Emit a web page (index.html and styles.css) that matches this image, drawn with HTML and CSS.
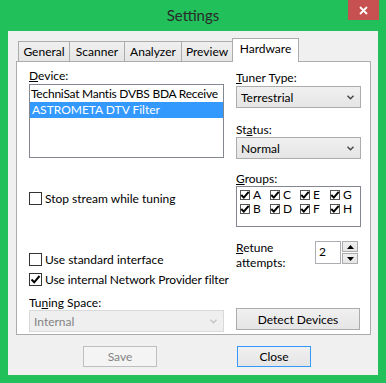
FILE: index.html
```
<!DOCTYPE html>
<html>
<head>
<meta charset="utf-8">
<link rel="stylesheet" href="styles.css">
</head>
<body>
<div class="window">
  <div class="titlebar">
    <span></span>
    <span class="title">Settings</span>
    <span class="close-x"><svg width="9" height="9" viewBox="0 0 9 9"><path d="M1 1L8 8M8 1L1 8" stroke="#fff" stroke-width="1.8"/></svg></span>
  </div>
  <div class="client">
    <div class="tabs">
      <div class="tab tab-general">General</div>
      <div class="tab tab-scanner">Scanner</div>
      <div class="tab tab-analyzer">Analyzer</div>
      <div class="tab tab-preview">Preview</div>
      <div class="tab tab-hardware active">Hardware</div>
    </div>
    <div class="panel">
      <div class="col-left">
        <div class="lbl"><u>D</u>evice:</div>
        <div class="listbox">
          <div class="item item-tight">TechniSat Mantis DVBS BDA Receive</div>
          <div class="item selected">ASTROMETA DTV Filter</div>
        </div>
        <div class="chk chk-stop"><span class="box"></span>Stop stream while tuning</div>
        <div class="chk chk-std"><span class="box"></span>Use standard interface</div>
        <div class="chk chk-net"><span class="box"><svg width="11" height="11" viewBox="0 0 11 11"><path d="M1.5 5.5L4.2 8.3L9.5 2" fill="none" stroke="#000" stroke-width="2"/></svg></span>Use internal Network Provider filter</div>
        <div class="lbl lbl-space">Tu<u>n</u>ing Space:</div>
        <div class="select disabled"><span>Internal</span><svg width="7" height="5" viewBox="0 0 7 5"><path d="M0.5 0.8L3.5 3.8L6.5 0.8" fill="none" stroke="#c4c4c4" stroke-width="1.4"/></svg></div>
      </div>
      <div class="col-right">
        <div class="lbl"><u>T</u>uner Type:</div>
        <div class="select"><span>Terrestrial</span><svg width="7" height="5" viewBox="0 0 7 5"><path d="M0.5 0.8L3.5 3.8L6.5 0.8" fill="none" stroke="#444" stroke-width="1.4"/></svg></div>
        <div class="lbl lbl-status">St<u>a</u>tus:</div>
        <div class="select"><span>Normal</span><svg width="7" height="5" viewBox="0 0 7 5"><path d="M0.5 0.8L3.5 3.8L6.5 0.8" fill="none" stroke="#444" stroke-width="1.4"/></svg></div>
        <div class="lbl lbl-groups"><u>G</u>roups:</div>
        <div class="groups">
          <div class="g"><span class="gbox"><svg width="10" height="10" viewBox="0 0 10 10"><path d="M1.3 5L3.8 7.6L8.7 1.8" fill="none" stroke="#000" stroke-width="2"/></svg></span>A</div>
          <div class="g"><span class="gbox"><svg width="10" height="10" viewBox="0 0 10 10"><path d="M1.3 5L3.8 7.6L8.7 1.8" fill="none" stroke="#000" stroke-width="2"/></svg></span>C</div>
          <div class="g"><span class="gbox"><svg width="10" height="10" viewBox="0 0 10 10"><path d="M1.3 5L3.8 7.6L8.7 1.8" fill="none" stroke="#000" stroke-width="2"/></svg></span>E</div>
          <div class="g"><span class="gbox"><svg width="10" height="10" viewBox="0 0 10 10"><path d="M1.3 5L3.8 7.6L8.7 1.8" fill="none" stroke="#000" stroke-width="2"/></svg></span>G</div>
          <div class="g"><span class="gbox"><svg width="10" height="10" viewBox="0 0 10 10"><path d="M1.3 5L3.8 7.6L8.7 1.8" fill="none" stroke="#000" stroke-width="2"/></svg></span>B</div>
          <div class="g"><span class="gbox"><svg width="10" height="10" viewBox="0 0 10 10"><path d="M1.3 5L3.8 7.6L8.7 1.8" fill="none" stroke="#000" stroke-width="2"/></svg></span>D</div>
          <div class="g"><span class="gbox"><svg width="10" height="10" viewBox="0 0 10 10"><path d="M1.3 5L3.8 7.6L8.7 1.8" fill="none" stroke="#000" stroke-width="2"/></svg></span>F</div>
          <div class="g"><span class="gbox"><svg width="10" height="10" viewBox="0 0 10 10"><path d="M1.3 5L3.8 7.6L8.7 1.8" fill="none" stroke="#000" stroke-width="2"/></svg></span>H</div>
        </div>
        <div class="retune">
          <div class="lbl retune-lbl"><u>R</u>etune<br>attempts:</div>
          <div class="spin-input">2</div>
          <div class="spin-btns">
            <div class="spin-btn"><svg width="7" height="4" viewBox="0 0 7 4"><path d="M0 4L3.5 0L7 4Z" fill="#000"/></svg></div>
            <div class="spin-btn"><svg width="7" height="4" viewBox="0 0 7 4"><path d="M0 0L3.5 4L7 0Z" fill="#000"/></svg></div>
          </div>
        </div>
        <div class="btn btn-detect">Detect Devices</div>
      </div>
    </div>
    <div class="buttons">
      <div class="btn btn-save">Save</div>
      <div class="btn btn-close">Close</div>
    </div>
  </div>
</div>
</body>
</html>
```
FILE: styles.css
```
* { box-sizing: border-box; }
html, body { margin: 0; padding: 0; }
body {
  width: 386px;
  height: 383px;
  background: #21c05b;
  font-family: Lato, "Open Sans", sans-serif;
  font-size: 12px;
  color: #000;
  overflow: hidden;
}
u { text-decoration: underline; text-underline-offset: 1px; }

.window { width: 386px; height: 383px; }

.titlebar {
  height: 31px;
  display: grid;
  grid-template-columns: 1fr auto 1fr;
}
.title {
  font-size: 15px;
  line-height: 20px;
  padding-top: 5px;
  color: #2a2a2a;
}
.close-x {
  justify-self: end;
  margin-right: 7px;
  width: 31px;
  height: 20px;
  background: #c75050;
  display: flex;
  align-items: center;
  justify-content: center;
}

.client {
  margin: 0 8px;
  height: 344px;
  background: #f0f0f0;
  padding-top: 8px;
}

.tabs {
  display: flex;
  align-items: flex-end;
  height: 22px;
  padding-left: 10px;
}
.tab {
  height: 20px;
  border: 1px solid #acacac;
  border-bottom: none;
  background: linear-gradient(#f0f0f0, #e5e5e5);
  text-align: center;
  line-height: 19px;
  margin-left: -1px;
}
.tab:first-child { margin-left: 0; }
.tab-general { width: 52px; }
.tab-scanner { width: 56px; }
.tab-analyzer { width: 58px; }
.tab-preview { width: 52px; }
.tab-hardware { width: 67px; }
.tab.active {
  height: 24px;
  background: #fff;
  line-height: 20px;
  margin-bottom: -1px;
  position: relative;
  z-index: 1;
}

.panel {
  margin: 0 7px 0 8px;
  height: 274px;
  border: 1px solid #acacac;
  background: #fff;
  display: grid;
  grid-template-columns: 195px 125px;
  column-gap: 12px;
  padding: 6px 8px 0 12px;
}

.lbl { line-height: 15px; white-space: nowrap; }

.listbox {
  margin-top: 1px;
  height: 74px;
  border: 1px solid #828790;
  padding-top: 1px;
  overflow: hidden;
}
.item {
  height: 16px;
  line-height: 16px;
  padding-left: 2px;
  white-space: nowrap;
  overflow: hidden;
}
.item-tight { letter-spacing: -0.25px; padding-left: 1px; }
.item.selected { background: #3399ff; color: #fff; }

.chk {
  display: flex;
  align-items: center;
  line-height: 15px;
  white-space: nowrap;
}
.box {
  width: 13px;
  height: 13px;
  border: 1px solid #333;
  background: #fff;
  margin-right: 3px;
  display: flex;
  align-items: center;
  justify-content: center;
  flex: none;
}
.chk-stop { margin-top: 33px; }
.chk-std { margin-top: 46px; }
.chk-net { margin-top: 5px; letter-spacing: -0.1px; }
.lbl-space { margin-top: 8px; }

.select {
  height: 22px;
  border: 1px solid #acacac;
  background: linear-gradient(#f0f0f0, #e5e5e5);
  display: flex;
  align-items: center;
  justify-content: space-between;
  padding: 0 6px 0 4px;
}
.select.disabled {
  background: #efefef;
  border-color: #d9d9d9;
  color: #838383;
}

.col-right { padding-top: 2px; }
.col-right .select { margin-top: 1px; }
.lbl-status { margin-top: 14px; }
.col-right .lbl-status + .select { margin-top: 0; }
.lbl-groups { margin-top: 12px; }

.groups {
  height: 41px;
  border: 1px solid #828790;
  padding: 1px 0 0 3px;
  display: grid;
  grid-template-columns: repeat(4, 30px);
  grid-auto-rows: 14px;
}
.g {
  display: flex;
  align-items: center;
  line-height: 14px;
}
.gbox {
  width: 10px;
  height: 10px;
  border: 1px solid #555;
  margin-right: 3px;
  display: flex;
  align-items: center;
  justify-content: center;
}
.gbox svg { flex: none; }

.retune {
  margin-top: 13px;
  display: flex;
  align-items: flex-start;
}
.retune-lbl { width: 79px; }
.spin-input {
  margin-top: 1px;
  width: 26px;
  height: 23px;
  border: 1px solid #abadb3;
  background: #fff;
  padding-left: 3px;
  line-height: 20px;
}
.spin-btns {
  margin-top: 1px;
  margin-left: 1px;
  display: flex;
  flex-direction: column;
}
.spin-btn {
  width: 16px;
  height: 11px;
  border: 1px solid #acacac;
  background: linear-gradient(#f0f0f0, #e5e5e5);
  display: flex;
  align-items: center;
  justify-content: center;
}
.spin-btn + .spin-btn { margin-top: 1px; height: 11px; }

.btn {
  height: 22px;
  border: 1px solid #acacac;
  background: linear-gradient(#f0f0f0, #e5e5e5);
  display: flex;
  align-items: center;
  justify-content: center;
}
.btn-detect { margin-top: 38px; width: 124px; }

.buttons {
  display: flex;
  margin-top: 11px;
  padding-left: 75px;
  gap: 80px;
}
.btn-save, .btn-close { width: 74px; height: 21px; }
.btn-save {
  border-color: #bfbfbf;
  background: #f4f4f4;
  color: #838383;
}
.btn-close { border-color: #3399ff; }
```
